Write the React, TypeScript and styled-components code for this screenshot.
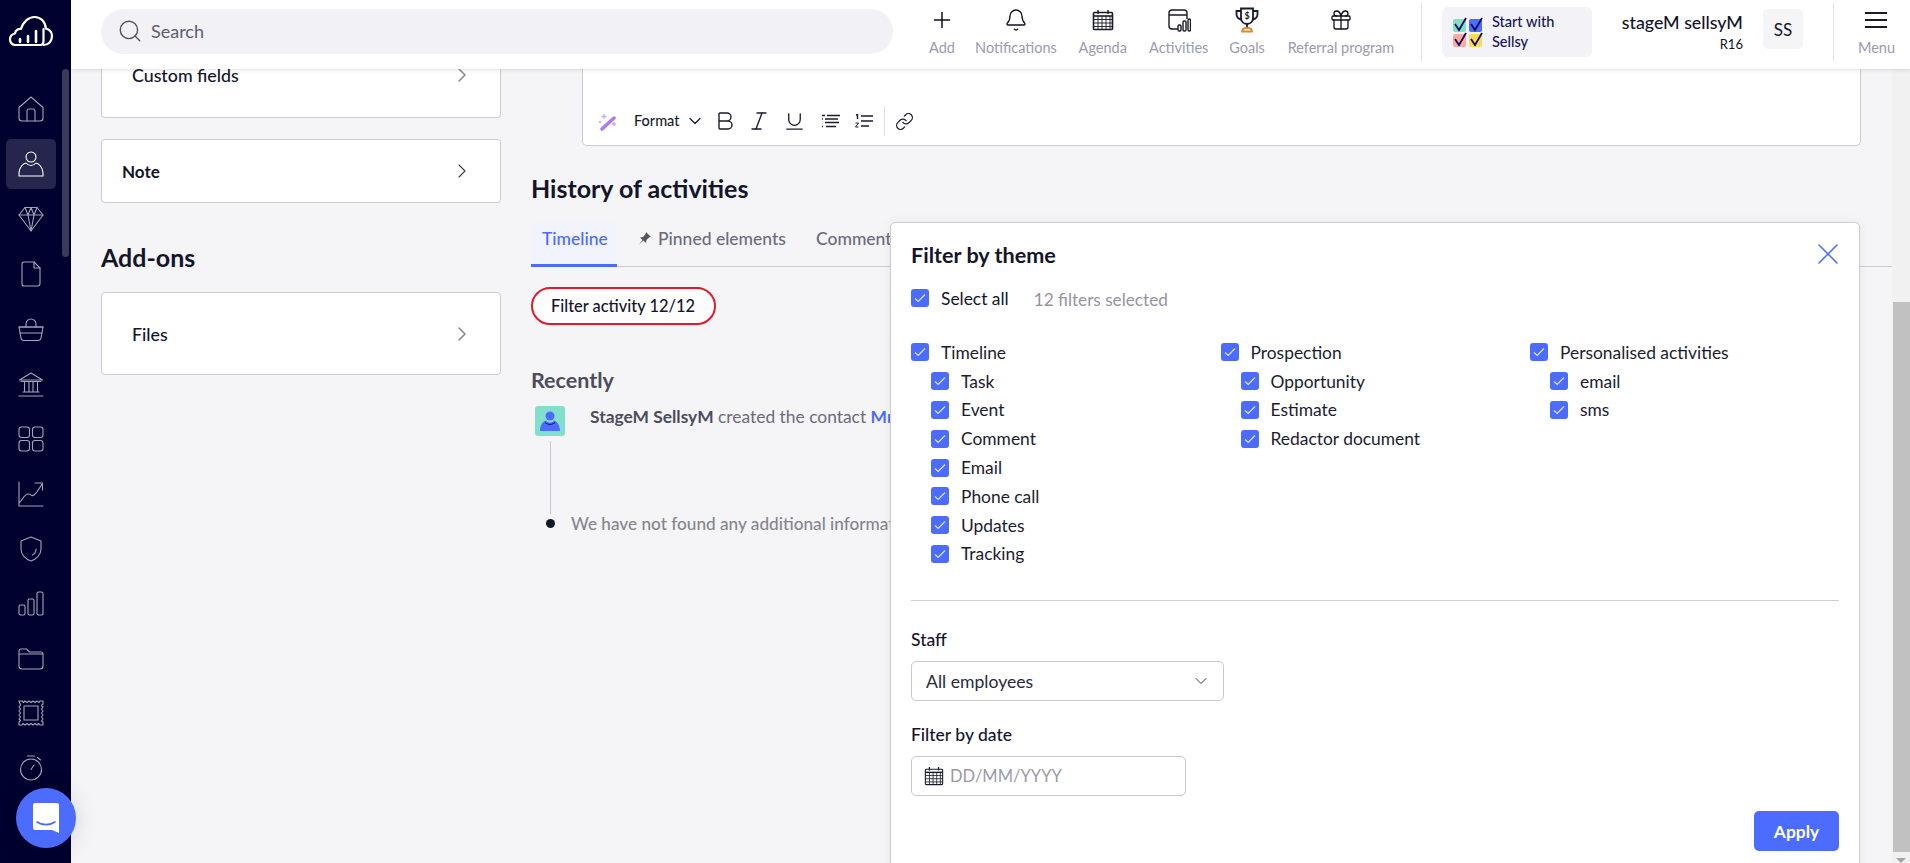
import React from "react";
import styled, { createGlobalStyle } from "styled-components";
import { ChevronRight, ChevronDown, Bold, Italic, Underline, Link, X, Search, Plus, Bell, Gift } from "lucide-react";

const Global = createGlobalStyle`
  html, body { margin: 0; padding: 0; height: 100%; overflow: hidden; }
  body { font-family: Lato, "Open Sans", "Liberation Sans", sans-serif; color: #14142b; background: #f5f5f8; }
  * { box-sizing: border-box; }
`;

const Page = styled.div`
  position: relative;
  display: flex;
  width: 1910px;
  height: 863px;
  overflow: hidden;
`;
const Sidebar = styled.nav`
  position: relative;
  flex: none;
  width: 71px;
  height: 100%;
  background: #01012f;
  display: flex;
  flex-direction: column;
  align-items: flex-start;
`;
const LogoBox = styled.div`
  height: 82px;
  width: 100%;
  padding: 15px 0 0 8px;
`;
const SideThumb = styled.div`
  position: absolute;
  left: 62px;
  top: 69px;
  width: 7px;
  height: 188px;
  border-radius: 4px;
  background: #3a3a5a;
`;
const SideItem = styled.div<{ $active?: boolean }>`
  flex: none;
  width: 50px;
  height: 54.9px;
  margin-left: 6px;
  display: flex;
  align-items: center;
  justify-content: center;
  color: ${(p) => (p.$active ? "#ffffff" : "#a4a4b6")};
  position: relative;
  &::before {
    content: "";
    display: ${(p) => (p.$active ? "block" : "none")};
    position: absolute;
    inset: 2px 0 3px 0;
    background: #25254d;
    border-radius: 5px;
  }
  svg { position: relative; }
`;
const Chat = styled.div`
  position: absolute;
  left: 16px;
  top: 788px;
  width: 60px;
  height: 60px;
  border-radius: 50%;
  background: #4c6bff;
  box-shadow: 0 2px 24px rgba(0, 0, 0, 0.14);
  display: flex;
  align-items: center;
  justify-content: center;
  z-index: 5;
`;
const Main = styled.div`
  flex: 1;
  min-width: 0;
  display: flex;
  flex-direction: column;
`;
const Topbar = styled.header`
  position: relative;
  z-index: 3;
  flex: none;
  height: 69px;
  background: #fff;
  box-shadow: 0 1px 4px rgba(0, 0, 0, 0.12);
  display: flex;
  align-items: flex-start;
  padding-left: 30px;
`;
const SearchPill = styled.div`
  width: 792px;
  height: 45px;
  margin-top: 9px;
  border-radius: 23px;
  background: #f1f1f6;
  display: flex;
  align-items: center;
  padding: 0 0 1px 16px;
  gap: 8px;
  color: #5d5d6e;
  font-size: 18px;
`;
const ActionNav = styled.div`
  display: flex;
  margin-left: 36px;
  gap: 20.4px;
`;
const Action = styled.div<{ $w: number }>`
  width: ${(p) => p.$w}px;
  height: 69px;
  display: flex;
  flex-direction: column;
  align-items: center;
  padding-top: 7px;
  color: #101020;
  white-space: nowrap;
`;
const ActionIcon = styled.div`
  height: 26px;
  display: flex;
  align-items: center;
  justify-content: center;
`;
const ActionLabel = styled.span`
  margin-top: 5px;
  font-size: 14.5px;
  line-height: 20px;
  color: #9a9ab0;
`;
const Sep = styled.div<{ $ml: number }>`
  flex: none;
  width: 1px;
  height: 60px;
  margin: 2px 0 0 ${(p) => p.$ml}px;
  background: #e3e3e8;
`;
const StartBox = styled.div`
  width: 150px;
  height: 50px;
  margin: 7px 0 0 20px;
  border-radius: 6px;
  background: #f2f2f7;
  display: flex;
  align-items: center;
  padding-left: 10px;
  gap: 6px;
  color: #14145a;
  font-size: 14.5px;
  line-height: 20px;
  font-weight: 500;
`;
const UserInfo = styled.div`
  width: 151px;
  padding-top: 11px;
  text-align: right;
  color: #14142b;
`;
const UserName = styled.div`
  font-size: 17.8px;
  line-height: 22px;
  font-weight: 500;
  white-space: nowrap;
`;
const UserRole = styled.div`
  font-size: 13px;
  line-height: 22px;
`;
const Initials = styled.div`
  width: 40px;
  height: 40px;
  margin: 9px 0 0 20px;
  border-radius: 5px;
  background: #f5f5f8;
  display: flex;
  align-items: center;
  justify-content: center;
  font-size: 17px;
`;
const MenuButton = styled.div`
  flex: 1;
  display: flex;
  flex-direction: column;
  align-items: center;
  padding: 7px 0 0 9px;
`;
const Body = styled.div`
  flex: 1;
  min-height: 0;
  display: flex;
  background: #f5f5f8;
`;
const LeftCol = styled.aside`
  flex: none;
  width: 400px;
  margin-left: 30px;
  display: flex;
  flex-direction: column;
`;
const Card = styled.div<{ $h: number; $clipped?: boolean; $px: number; $bold?: boolean; $gap?: number }>`
  flex: none;
  height: ${(p) => p.$h}px;
  margin-top: ${(p) => p.$gap ?? 0}px;
  background: #fff;
  border: 1px solid #cbcbd1;
  ${(p) => (p.$clipped ? "border-top: none; border-radius: 0 0 4px 4px;" : "border-radius: 4px;")}
  display: flex;
  align-items: ${(p) => (p.$clipped ? "flex-start" : "center")};
  justify-content: space-between;
  padding: 0 26px 0 ${(p) => p.$px}px;
  font-size: ${(p) => (p.$bold ? 17 : 17.8)}px;
  font-weight: ${(p) => (p.$bold ? 700 : 500)};
  color: #14142b;
`;
const ClippedRow = styled.div`
  display: flex;
  width: 100%;
  justify-content: space-between;
  align-items: center;
  height: 12px;
`;
const AddonsTitle = styled.h2`
  margin: 38px 0 19px;
  font-size: 25px;
  line-height: 32px;
  font-weight: 700;
  color: #14142b;
`;
const Content = styled.main`
  position: relative;
  flex: 1;
  min-width: 0;
  margin-left: 30px;
  display: flex;
  flex-direction: column;
  align-items: flex-start;
`;
const Editor = styled.div`
  flex: none;
  width: 1279px;
  height: 77px;
  margin-left: 51px;
  background: #fff;
  border: 1px solid #cbcbd1;
  border-top: none;
  border-radius: 0 0 5px 5px;
  display: flex;
  align-items: flex-end;
  padding: 0 0 14px 16px;
  color: #1c1c2e;
`;
const ToolText = styled.span`
  margin-left: 17px;
  font-size: 14.5px;
  font-weight: 500;
  line-height: 20px;
`;
const Tool = styled.span<{ $ml: number }>`
  display: flex;
  margin-left: ${(p) => p.$ml}px;
  height: 20px;
  align-items: center;
`;
const ToolSep = styled.span`
  width: 1px;
  height: 30px;
  margin: 0 10px -5px 11px;
  background: #e0e0e5;
`;
const History = styled.h2`
  margin: 27px 0 0;
  font-size: 25px;
  line-height: 30px;
  font-weight: 700;
  color: #14142b;
  white-space: nowrap;
`;
const Tabs = styled.div`
  margin-top: 19px;
  width: 100%;
  height: 45px;
  display: flex;
  border-bottom: 1px solid #cbcbd1;
`;
const Tab = styled.div<{ $active?: boolean }>`
  height: 45px;
  display: flex;
  align-items: flex-start;
  gap: 6px;
  padding: 7px ${(p) => (p.$active ? 11 : 15)}px 0;
  margin-right: ${(p) => (p.$active ? "6px" : "0")};
  font-size: 17.5px;
  line-height: 20px;
  font-weight: 500;
  white-space: nowrap;
  color: ${(p) => (p.$active ? "#4c6bff" : "#6b6b7b")};
  ${(p) => (p.$active ? "border-bottom: 3px solid #4c6bff; background: #f2f4fd; width: 86px;" : "")}
`;
const FilterButton = styled.button`
  margin-top: 20px;
  width: 185px;
  height: 38px;
  border: 2px solid #e3182d;
  border-radius: 19px;
  background: #fdfdfe;
  font: inherit;
  font-size: 16.4px;
  font-weight: 500;
  color: #14142b;
  padding: 0 1px 2px 0;
`;
const Recently = styled.h3`
  margin: 41px 0 0;
  font-size: 21.5px;
  line-height: 28px;
  font-weight: 700;
  color: #4c4c5c;
`;
const Entry = styled.div`
  margin: 12px 0 0 4px;
  display: flex;
  gap: 25px;
  white-space: nowrap;
  font-size: 17.4px;
  line-height: 22px;
  color: #6b6b7b;
`;
const Avatar = styled.div`
  width: 30px;
  height: 30px;
  border-radius: 3px;
  background: #81e0cb;
  display: flex;
  align-items: center;
  justify-content: center;
`;
const Strong = styled.b`
  color: #4c4c5c;
`;
const LinkText = styled.span`
  color: #4c6bff;
  font-weight: 700;
`;
const Connector = styled.div`
  margin: 5px 0 0 19px;
  width: 1px;
  height: 73px;
  background: #c8c8cf;
`;
const Empty = styled.div`
  display: flex;
  align-items: center;
  height: 18px;
  margin-left: 15px;
  gap: 16px;
  font-size: 17.2px;
  white-space: nowrap;
  color: #85858f;
  font-weight: 500;
`;
const Dot = styled.span`
  flex: none;
  width: 9px;
  height: 9px;
  border-radius: 50%;
  background: #111827;
`;
const Track = styled.div`
  flex: none;
  width: 18px;
  background: #f1f1f1;
  display: flex;
  flex-direction: column;
  align-items: center;
  padding-top: 233px;
`;
const Thumb = styled.div`
  width: 17px;
  height: 550px;
  background: #c1c1c1;
`;
const ArrowDown = styled.div`
  margin-top: 6px;
  border-left: 5px solid transparent;
  border-right: 5px solid transparent;
  border-top: 5px solid #a3a3a3;
`;
const Panel = styled.section`
  position: absolute;
  left: 359px;
  top: 153px;
  width: 970px;
  height: 720px;
  background: #fff;
  border: 1px solid #cbcbd1;
  border-radius: 5px 5px 0 0;
  box-shadow: 0 0 12px rgba(0, 0, 0, 0.06);
  padding: 19px 20px 0;
  z-index: 2;
  display: flex;
  flex-direction: column;
  align-items: flex-start;
`;
const PanelHead = styled.div`
  width: 100%;
  display: flex;
  justify-content: space-between;
  align-items: center;
  height: 26px;
`;
const PanelTitle = styled.h2`
  margin: 0;
  font-size: 21.6px;
  line-height: 26px;
  font-weight: 700;
  color: #14142b;
`;
const Close = styled.span`
  display: flex;
  color: #4c6bff;
  margin: -2px -7px 0 0;
`;
const SelectAll = styled.div`
  margin-top: 20px;
  height: 20px;
  display: flex;
  align-items: center;
  font-size: 17.4px;
`;
const Count = styled.span`
  margin-left: 25px;
  color: #94949f;
  font-size: 17.2px;
  padding-top: 2px;
`;
const Groups = styled.div`
  margin-top: 30px;
  display: grid;
  grid-template-columns: repeat(3, 309.5px);
  height: 231px;
`;
const Group = styled.div`
  display: flex;
  flex-direction: column;
`;
const Row = styled.label<{ $sub?: boolean }>`
  height: 28.8px;
  display: flex;
  align-items: center;
  padding-left: ${(p) => (p.$sub ? 20 : 0)}px;
  font-size: 17.4px;
  color: #1c1c30;
`;
const Box = styled.span`
  flex: none;
  width: 18px;
  height: 18px;
  margin-right: 12px;
  border-radius: 3px;
  background: #4c6bff;
  display: flex;
  align-items: center;
  justify-content: center;
`;
const Divider = styled.hr`
  width: 100%;
  height: 1px;
  margin: 31px 0 0;
  border: none;
  background: #cfcfd4;
`;
const FieldLabel = styled.div<{ $mt: number }>`
  margin-top: ${(p) => p.$mt}px;
  font-size: 17.5px;
  line-height: 20px;
  font-weight: 500;
  color: #14142b;
`;
const Select = styled.div`
  margin-top: 11px;
  width: 313px;
  height: 40px;
  border: 1px solid #c8c8cf;
  border-radius: 5px;
  display: flex;
  align-items: center;
  justify-content: space-between;
  padding: 0 12px 0 14px;
  font-size: 17.6px;
  color: #2a2a3c;
`;
const DateInput = styled.div`
  margin-top: 11px;
  width: 275px;
  height: 40px;
  border: 1px solid #c8c8cf;
  border-radius: 5px;
  display: flex;
  align-items: center;
  padding-left: 12px;
  gap: 6px;
  font-size: 16.5px;
  color: #9a9aa8;
`;
const Footer = styled.div`
  width: 100%;
  margin-top: 15px;
  display: flex;
  justify-content: flex-end;
`;
const Apply = styled.button`
  width: 85px;
  height: 40px;
  border: none;
  border-radius: 5px;
  background: #4c6bff;
  color: #fff;
  font: inherit;
  font-size: 17.4px;
  font-weight: 700;
  padding: 0;
`;

const S = { fill: "none", stroke: "currentColor", strokeWidth: 1.1, strokeLinecap: "round", strokeLinejoin: "round" } as const;
const Ico: React.FC<{ children: React.ReactNode; size?: number }> = ({ children, size = 26 }) => (
  <svg width={size} height={size} viewBox="0 0 26 26" {...S}>{children}</svg>
);

const Logo = () => (
  <svg width="46" height="34" viewBox="0 0 46 34" fill="none" stroke="#fff" strokeWidth="2.2" strokeLinecap="round" strokeLinejoin="round">
    <path d="M32 30H7.500C4 30 2 27 2 24.500c0-3 2-5.400 5-6 .5-3 3-5 6-4.500C15 7 20.500 2 26.500 2c6.500 0 11 5 11.300 11.500" />
    <path d="M38 13.500c3.500 1 6 3.800 6 7.800 0 4.700-3.500 8.700-8.500 8.700" />
    <path d="M35.500 14v12c0 2.500-1.500 4-3.500 4" />
    <path d="M12 24v3M20 21v6M28 16v11" strokeWidth="2.600" />
  </svg>
);

const sideIcons: React.ReactNode[] = [
  <Ico><path d="M1 11.500 13 1l12 10.500V22a3 3 0 0 1-3 3H4a3 3 0 0 1-3-3z" /><path d="M9 25V15a2 2 0 0 1 2-2h4a2 2 0 0 1 2 2v10" /></Ico>,
  <Ico><circle cx="13" cy="6" r="5" /><path d="M1 25v-3c0-6 5-10 7-10 1.500 1.700 3 2.500 5 2.500s3.500-.8 5-2.500c2 0 7 4 7 10v3z" /></Ico>,
  <Ico><path d="M7 1.500h12L25 9 13 25 1 9z" /><path d="M1 9h24M7 1.500 10 9l3 16 3-16 3-7.500M10 9l3-7.500L16 9" /></Ico>,
  <Ico><path d="M5 3a2 2 0 0 1 2-2h10l6 6v15.500a2.500 2.500 0 0 1-2.500 2.500H7a2 2 0 0 1-2-2z" transform="translate(-1 0)" /><path d="M16 1v6h6" /></Ico>,
  <Ico><path d="M1 11h24l-2 11a3 3 0 0 1-3 2.500H6A3 3 0 0 1 3 22z" /><path d="M2 17h22M8 11V8a5 5 0 0 1 10 0v3" /><path d="M1 11h24" /></Ico>,
  <Ico><path d="M1.500 9 13 2l11.500 7zM3 25h20M1 25h24M5 21h16M6.500 11v10M11 11v10M15 11v10M19.500 11v10M3 10.500h20" /></Ico>,
  <Ico><rect x="1" y="1" width="10.500" height="10.500" rx="2.500" /><rect x="14.500" y="1" width="10.500" height="10.500" rx="2.500" /><rect x="1" y="14.500" width="10.500" height="10.500" rx="2.500" /><rect x="14.500" y="14.500" width="10.500" height="10.500" rx="2.500" /></Ico>,
  <Ico><path d="M1 1v24h24M1 22c4-3 5-9 9-9s3 3 6 1 5-6 8-11M17 2h7.500v7" /></Ico>,
  <Ico><path d="M13 1l10 4v8c0 6-5 10.500-10 12C8 23.500 3 19 3 13V5z" /><path d="M18 13c0 3-1.500 5-3.500 6" /></Ico>,
  <Ico><rect x="1" y="15" width="6" height="10" rx="1.500" /><rect x="10" y="9" width="6" height="16" rx="1.500" /><rect x="19" y="2" width="6" height="23" rx="1.500" /></Ico>,
  <Ico><path d="M1 6a2 2 0 0 1 2-2h5.500l3 3H23a2 2 0 0 1 2 2v12a3 3 0 0 1-3 3H4a3 3 0 0 1-3-3zM1 9h24" /></Ico>,
  <Ico><path d="M1 1h3l1.500 1.500L7 1l2 1.500L11 1l2 1.500L15 1l2 1.500L19 1l2 1.500L22 1h3v3l-1.500 1.500L25 7l-1.500 2L25 11l-1.500 2L25 15l-1.500 2L25 19l-1.500 2L25 22v3h-3l-1.500-1.500L19 25l-2-1.500L15 25l-2-1.500L11 25l-2-1.500L7 25l-2-1.500L4 25H1v-3l1.500-1.500L1 19l1.500-2L1 15l1.500-2L1 11l1.500-2L1 7l1.500-2z" /><rect x="6" y="6" width="14" height="14" /></Ico>,
  <Ico><circle cx="13" cy="14.500" r="10.500" /><path d="M9.500 1h7M19.500 2.500l3 2.500M13 14.500 16 10" /></Ico>,
];

const Check = () => (
  <svg width="12" height="10" viewBox="0 0 12 10" fill="none" stroke="#dfe5ff" strokeWidth="1.2"><path d="M1 5.500 4.200 8.500 11 1.500" /></svg>
);
const Option: React.FC<{ label: string; sub?: boolean }> = ({ label, sub }) => (
  <Row $sub={sub}><Box><Check /></Box>{label}</Row>
);

const groups = [
  { title: "Timeline", items: ["Task", "Event", "Comment", "Email", "Phone call", "Updates", "Tracking"] },
  { title: "Prospection", items: ["Opportunity", "Estimate", "Redactor document"] },
  { title: "Personalised activities", items: ["email", "sms"] },
];

const CalendarGrid: React.FC<{ size: number; w?: number }> = ({ size, w = 1.2 }) => (
  <svg width={size} height={size} viewBox="0 0 22 22" fill="none" stroke="#1a1a2a" strokeWidth={w}>
    <rect x="1.500" y="3.500" width="19" height="17" rx="1" />
    <path d="M6 1v4M16 1v4" strokeWidth="1.400" />
    <path d="M1.500 7h19" strokeWidth="1.600" />
    <path d="M1.500 10.500h19M1.500 14h19M1.500 17.500h19M6 7v13M10 7v13M14 7v13M18 7v13" strokeWidth="0.900" />
  </svg>
);

export default function App() {
  return (
    <>
      <Global />
      <Page>
        <Sidebar>
          <LogoBox><Logo /></LogoBox>
          {sideIcons.map((ic, i) => (
            <SideItem key={i} $active={i === 1}>{ic}</SideItem>
          ))}
          <SideThumb />
          <Chat>
            <svg width="28" height="32" viewBox="0 0 28 32">
              <path d="M3 1h22a2 2 0 0 1 2 2v28l-7-3H3a2 2 0 0 1-2-2V3a2 2 0 0 1 2-2z" fill="#fff" />
              <path d="M5 20c5 3.500 13 3.500 18 0" fill="none" stroke="#4c6bff" strokeWidth="1.600" strokeLinecap="round" />
            </svg>
          </Chat>
        </Sidebar>
        <Main>
          <Topbar>
            <SearchPill>
              <Search size={26} strokeWidth={1.3} color="#55555f" />
              Search
            </SearchPill>
            <ActionNav>
              <Action $w={26}><ActionIcon><Plus size={26} strokeWidth={1.4} /></ActionIcon><ActionLabel>Add</ActionLabel></Action>
              <Action $w={81}><ActionIcon><Bell size={24} strokeWidth={1.3} /></ActionIcon><ActionLabel>Notifications</ActionLabel></Action>
              <Action $w={52}><ActionIcon><CalendarGrid size={22} w={1.6} /></ActionIcon><ActionLabel>Agenda</ActionLabel></Action>
              <Action $w={59}>
                <ActionIcon>
                  <svg width="24" height="24" viewBox="0 0 24 24" fill="none" stroke="#1a1a2a" strokeWidth="1.400">
                    <path d="M11 21H5a3 3 0 0 1-3-3V5a3 3 0 0 1 3-3h12a3 3 0 0 1 3 3v6M2 7h18" />
                    <rect x="11" y="17" width="3" height="6" rx="1.200" />
                    <rect x="16" y="13" width="3" height="10" rx="1.200" />
                    <rect x="21" y="11" width="2.500" height="12" rx="1.200" />
                  </svg>
                </ActionIcon>
                <ActionLabel>Activities</ActionLabel>
              </Action>
              <Action $w={37}>
                <ActionIcon>
                  <svg width="26" height="26" viewBox="0 0 24 26" fill="none" strokeWidth="1.800">
                    <path d="M6 1.500h12v9c0 4-2.500 6.500-6 6.500s-6-2.500-6-6.500z" stroke="#1a1a2a" />
                    <path d="M6 4H1.500v3c0 3 2 5 5 5.500M18 4h4.500v3c0 3-2 5-5 5.500" stroke="#1a1a2a" />
                    <path d="M12 17v4" stroke="#1a1a2a" />
                    <path d="M7 24.500c0-2 2-3.500 5-3.500s5 1.500 5 3.500z" stroke="#e08a2a" />
                    <text x="12" y="12" textAnchor="middle" fontSize="9" fontWeight="700" fill="#1a1a2a" stroke="none" fontFamily="Lato, sans-serif">$</text>
                  </svg>
                </ActionIcon>
                <ActionLabel>Goals</ActionLabel>
              </Action>
              <Action $w={110}><ActionIcon><Gift size={24} strokeWidth={1.3} /></ActionIcon><ActionLabel>Referral program</ActionLabel></Action>
            </ActionNav>
            <Sep $ml={25} />
            <StartBox>
              <svg width="34" height="32" viewBox="0 0 34 32" fill="none">
                <rect x="1" y="3" width="13" height="13" rx="2" fill="#81e0cb" />
                <rect x="17" y="3" width="13" height="13" rx="2" fill="#4c6bff" />
                <rect x="1" y="18" width="13" height="13" rx="2" fill="#ffa9a3" />
                <rect x="17" y="18" width="13" height="13" rx="2" fill="#ffd95c" />
                <path d="M3 8l4 6 7-12M19 8l4 6 7-12M3 23l4 6 7-12M19 23l4 6 7-12" stroke="#10105a" strokeWidth="1.800" />
              </svg>
              <span>Start with<br />Sellsy</span>
            </StartBox>
            <UserInfo>
              <UserName>stageM sellsyM</UserName>
              <UserRole>R16</UserRole>
            </UserInfo>
            <Initials>SS</Initials>
            <Sep $ml={30} />
            <MenuButton>
              <ActionIcon>
                <svg width="22" height="18" viewBox="0 0 22 18" stroke="#1a1a2a" strokeWidth="2"><path d="M0 2h22M0 9h22M0 16h22" /></svg>
              </ActionIcon>
              <ActionLabel>Menu</ActionLabel>
            </MenuButton>
          </Topbar>
          <Body>
            <LeftCol>
              <Card $clipped $h={49} $px={30}>
                <ClippedRow>
                  Custom fields
                  <ChevronRight size={24} strokeWidth={1.6} color="#8a8a98" />
                </ClippedRow>
              </Card>
              <Card $h={64} $px={20} $bold $gap={21}>
                Note
                <ChevronRight size={24} strokeWidth={1.1} color="#3a3a4c" />
              </Card>
              <AddonsTitle>Add-ons</AddonsTitle>
              <Card $h={83} $px={30}>
                Files
                <ChevronRight size={24} strokeWidth={1.6} color="#8a8a98" />
              </Card>
            </LeftCol>
            <Content>
              <Editor>
                <svg width="18" height="18" viewBox="0 0 18 18" fill="none">
                  <path d="M3 16 15 5" stroke="#a77bf3" strokeWidth="3.500" strokeLinecap="round" />
                  <path d="M5 1v5M2.500 3.500h5M15 9v4M13 11h4M1 8v2M0 9h2" stroke="#c9a8f7" strokeWidth="1.300" />
                </svg>
                <ToolText>Format</ToolText>
                <Tool $ml={5}><ChevronDown size={20} strokeWidth={1.5} /></Tool>
                <Tool $ml={8}><Bold size={24} strokeWidth={1.4} /></Tool>
                <Tool $ml={10}><Italic size={24} strokeWidth={1.4} /></Tool>
                <Tool $ml={12}><Underline size={23} strokeWidth={1.4} /></Tool>
                <Tool $ml={16}>
                  <svg width="18" height="14" viewBox="0 0 18 14" stroke="#1c1c2e" strokeWidth="1.600"><path d="M0 1.500h3M5 1.500h13M3 5h13M0 5h1M3 8.500h14M0 12.500h1M4 12.500h10" /></svg>
                </Tool>
                <Tool $ml={15}>
                  <svg width="18" height="14" viewBox="0 0 18 14" stroke="#1c1c2e" strokeWidth="1.800"><path d="M6 2h12M6 7h12M6 12h8M1 1l1.500-.5V5" strokeWidth="1.400" fill="none" /><path d="M.5 9h3L.5 13h3" fill="none" strokeWidth="1" /></svg>
                </Tool>
                <ToolSep />
                <Tool $ml={0}><Link size={19} strokeWidth={1.6} /></Tool>
              </Editor>
              <History>History of activities</History>
              <Tabs>
                <Tab $active>Timeline</Tab>
                <Tab>
                  <svg width="14" height="20" viewBox="0 0 14 20" fill="#55555f"><path d="M8 3l5 5-2 .5-2.500 2.500L8 14l-2.500-2.500L1 15.500l3.500-4.500L2 8.500l3-.5L7.500 5z" /></svg>
                  Pinned elements
                </Tab>
                <Tab>Comments</Tab>
              </Tabs>
              <FilterButton>Filter activity 12/12</FilterButton>
              <Recently>Recently</Recently>
              <Entry>
                <Avatar>
                  <svg width="22" height="22" viewBox="0 0 22 22">
                    <circle cx="11" cy="6" r="4.500" fill="#4c6bff" />
                    <path d="M1 21c0-7 4-10 6-10.500 1 1.500 2.500 2 4 2s3-.5 4-2c2 .5 6 3.500 6 10.500z" fill="#4c6bff" />
                    <path d="M6 12.500c3 2.500 7 2.500 10 0" stroke="#10105a" fill="none" />
                  </svg>
                </Avatar>
                <span><Strong>StageM SellsyM</Strong> created the contact <LinkText>Mr Stage</LinkText></span>
              </Entry>
              <Connector />
              <Empty><Dot />We have not found any additional information</Empty>
              <Panel>
                <PanelHead>
                  <PanelTitle>Filter by theme</PanelTitle>
                  <Close><X size={36} strokeWidth={1} /></Close>
                </PanelHead>
                <SelectAll>
                  <Box><Check /></Box>Select all
                  <Count>12 filters selected</Count>
                </SelectAll>
                <Groups>
                  {groups.map((g) => (
                    <Group key={g.title}>
                      <Option label={g.title} />
                      {g.items.map((it) => <Option key={it} label={it} sub />)}
                    </Group>
                  ))}
                </Groups>
                <Divider />
                <FieldLabel $mt={29}>Staff</FieldLabel>
                <Select>
                  All employees
                  <ChevronDown size={20} strokeWidth={1.1} />
                </Select>
                <FieldLabel $mt={24}>Filter by date</FieldLabel>
                <DateInput>
                  <CalendarGrid size={20} />
                  DD/MM/YYYY
                </DateInput>
                <Footer><Apply>Apply</Apply></Footer>
              </Panel>
            </Content>
            <Track><Thumb /><ArrowDown /></Track>
          </Body>
        </Main>
      </Page>
    </>
  );
}
